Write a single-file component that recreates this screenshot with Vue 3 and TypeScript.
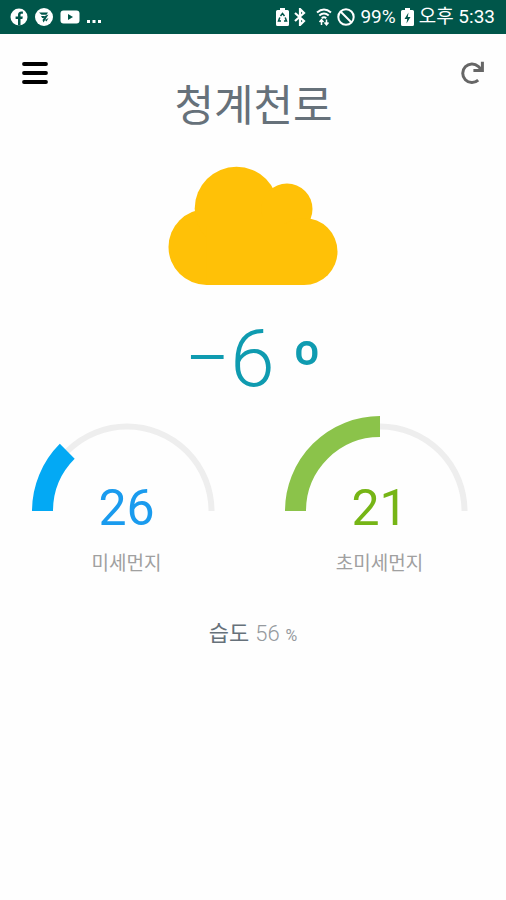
<script setup lang="ts">
interface Gauge {
  id: string
  label: string
  value: number
  ratio: number
  tone: string
}

const city = '청계천로'
const temperature = -6
const humidity = 56

const gauges: Gauge[] = [
  { id: 'pm10', label: '미세먼지', value: 26, ratio: 0.25, tone: 'blue' },
  { id: 'pm25', label: '초미세먼지', value: 21, ratio: 0.5, tone: 'green' },
]

const radius = 84.5
const center = 95

/** Arc path running clockwise from the left end of the half circle. */
function arc(ratio: number): string {
  const angle = Math.PI * (1 - ratio)
  const x = center + radius * Math.cos(angle)
  const y = center - radius * Math.sin(angle)
  return `M${center - radius} ${center}A${radius} ${radius} 0 0 1 ${x.toFixed(2)} ${y.toFixed(2)}`
}

function signed(value: number): string {
  return value < 0 ? `−${Math.abs(value)}` : `${value}`
}
</script>

<template>
  <div class="screen">
    <div class="status">
      <div class="group apps">
        <svg class="app" viewBox="0 0 18 18" aria-hidden="true">
          <circle cx="9" cy="9" r="8.5" fill="#fff" />
          <path d="M8 17.4V11H5.6V8.4H8V7c0-2.3 1.2-3.5 3.4-3.5h1.5v2.3h-1.2c-.9 0-1.2.5-1.2 1.2v1.4h2.3l-.4 2.6h-1.9v6.4z" fill="#00564a" />
        </svg>
        <svg class="app" viewBox="0 0 18 18" aria-hidden="true">
          <circle cx="9" cy="9" r="9" fill="#fff" />
          <path d="M4 4.5h9l-1.5 2.3H6.5zM6 8h4l-1.3 2H7.2zM13.5 6.5l-5 8-1-2.4 2.8-4.4zM10 12l3.5-2-2 3.5z" fill="#00564a" />
        </svg>
        <svg class="video" viewBox="0 0 20 14" aria-hidden="true">
          <rect x="0.5" y="0.5" width="19" height="13" rx="3" fill="#fff" />
          <path d="M8 4v6l5-3z" fill="#00564a" />
        </svg>
        <svg class="dots" viewBox="0 0 16 14" aria-hidden="true">
          <path d="M0 10h3v3H0zM5.5 10h3v3h-3zM11 10h3v3h-3z" fill="#fff" />
        </svg>
      </div>
      <div class="group system">
        <svg class="battery" viewBox="0 0 13 18" aria-hidden="true">
          <path d="M4 0h5v2h2.5q1.5 0 1.5 1.5v13q0 1.5-1.5 1.5h-10Q0 18 0 16.5v-13Q0 2 1.5 2H4z" fill="#fff" />
          <path d="M4.5 8l2-2.5 2 2.5M3.8 9.5L2.500 13H5M9.2 9.5l1.3 3.5H8" fill="none" stroke="#00564a" stroke-width="1.5" />
        </svg>
        <svg class="bluetooth" viewBox="0 0 12 18" aria-hidden="true">
          <path d="M1 5l9 8-4 4V1l4 4-9 8" fill="none" stroke="#fff" stroke-width="2.2" />
        </svg>
        <svg class="wifi" viewBox="0 0 16 18" aria-hidden="true">
          <path d="M1 4.5q7-6 14 0M3.3 7.5q4.7-4 9.4 0M5.8 10.2q2.2-1.8 4.4 0" fill="none" stroke="#fff" stroke-width="2" />
          <path d="M5.5 17v-5M3.5 14l2-2.3 2 2.3M10.5 11.5v5M8.5 14.5l2 2.3 2-2.3" fill="none" stroke="#fff" stroke-width="1.5" />
        </svg>
        <svg class="app" viewBox="0 0 18 18" aria-hidden="true">
          <circle cx="9" cy="9" r="7.7" fill="none" stroke="#fff" stroke-width="2" />
          <path d="M3.5 3.5l11 11" stroke="#fff" stroke-width="2" />
        </svg>
        <span>99%</span>
        <svg class="battery" viewBox="0 0 13 18" aria-hidden="true">
          <path d="M4 0h5v2h2.5q1.5 0 1.5 1.5v13q0 1.5-1.5 1.5h-10Q0 18 0 16.5v-13Q0 2 1.5 2H4z" fill="#fff" />
          <path d="M7.5 4.5L3.5 11h2.7l-.7 4.5 4-6.5H6.8z" fill="#00564a" />
        </svg>
        <span>오후 5:33</span>
      </div>
    </div>

    <header class="top">
      <button class="icon-button" type="button" aria-label="메뉴">
        <svg class="menu" viewBox="0 0 26 22" aria-hidden="true">
          <path d="M2 2h22M2 11h22M2 20h22" stroke="#000" stroke-width="3.8" stroke-linecap="round" />
        </svg>
      </button>
      <h1>{{ city }}</h1>
      <button class="icon-button" type="button" aria-label="새로고침">
        <svg class="refresh" viewBox="0 0 24 24" aria-hidden="true">
          <path d="M18.2 19.2A9.3 9.3 0 1 1 18.2 5.3L21.500 8.800" fill="none" stroke="#666" stroke-width="3" />
          <path d="M22.400 .8v8.700h-9" fill="none" stroke="#666" stroke-width="3" />
        </svg>
      </button>
    </header>

    <main>
      <svg class="cloud" viewBox="0 0 170 120" role="img" aria-label="흐림">
        <g fill="#ffc107">
          <circle cx="38.5" cy="81" r="38" />
          <circle cx="68.5" cy="42.5" r="41.8" />
          <circle cx="119" cy="43" r="25.5" />
          <circle cx="136" cy="85.5" r="33.5" />
          <path d="M38.5 60h97.5v59H38.5z" />
        </g>
      </svg>

      <p class="temperature">
        <span>{{ signed(temperature) }}</span>
        <span class="degree">º</span>
      </p>

      <section class="gauges">
        <figure v-for="gauge in gauges" :key="gauge.id" class="gauge" :class="gauge.tone">
          <div class="dial">
            <svg viewBox="0 0 190 95" aria-hidden="true">
              <path class="track" :d="arc(1)" />
              <path class="fill" :d="arc(gauge.ratio)" />
            </svg>
            <span class="value">{{ gauge.value }}</span>
          </div>
          <figcaption>{{ gauge.label }}</figcaption>
        </figure>
      </section>

      <p class="humidity">
        <span class="name">습도</span>
        <span>{{ humidity }}</span>
        <span class="unit">%</span>
      </p>
    </main>
  </div>
</template>

<style>
body {
  background: #fefefe;
}
</style>

<style scoped>
.screen {
  min-height: 100vh;
  font-family: Roboto, "Noto Sans CJK KR", sans-serif;
  background: #fefefe;
}

.status {
  display: flex;
  align-items: center;
  justify-content: space-between;
  box-sizing: border-box;
  height: 34px;
  padding: 0 11px 0 10px;
  background: #00564a;
  color: #fff;
  font-size: 19px;
  font-weight: 400;
  line-height: 36px;
  white-space: nowrap;
}

.group {
  display: flex;
  align-items: center;
}

.apps {
  gap: 7px;
}

.system {
  gap: 5px;
}

.app {
  width: 18px;
  height: 18px;
}

.video {
  width: 20px;
  height: 14px;
}

.dots {
  width: 16px;
  height: 14px;
}

.battery {
  width: 13px;
  height: 18px;
}

.bluetooth {
  width: 12px;
  height: 18px;
}

.wifi {
  width: 16px;
  height: 18px;
  margin-left: 5px;
}

.top {
  display: flex;
  align-items: flex-start;
  justify-content: space-between;
  padding: 16px 10px 0 11px;
}

.icon-button {
  display: flex;
  align-items: center;
  justify-content: center;
  width: 48px;
  height: 46px;
  padding: 0;
  border: 0;
  background: none;
}

.menu {
  width: 26px;
  height: 22px;
}

.refresh {
  width: 24px;
  height: 24px;
}

h1 {
  margin: 24px 0 0;
  color: #66717a;
  font-size: 43px;
  font-weight: 400;
  line-height: 64px;
}

main {
  display: flex;
  flex-direction: column;
  align-items: center;
}

.cloud {
  width: 170px;
  height: 120px;
  margin-top: 28px;
}

.temperature {
  display: flex;
  align-items: baseline;
  gap: 18px;
  margin: 28px 0 0;
  color: #0f9bb0;
  font-size: 80px;
  font-weight: 300;
  line-height: 90px;
}

.degree {
  font-size: 63px;
  font-weight: 700;
}

.gauges {
  display: grid;
  grid-template-columns: 1fr 1fr;
  width: 100%;
  margin-top: 6px;
}

.gauge {
  display: flex;
  flex-direction: column;
  align-items: center;
  margin: 0;
}

.dial {
  display: grid;
  justify-items: center;
  align-items: end;
  height: 122px;
}

.dial svg,
.value {
  grid-area: 1 / 1;
}

.dial svg {
  align-self: start;
  width: 190px;
  height: 95px;
}

.track,
.fill {
  fill: none;
}

.track {
  stroke: #eee;
  stroke-width: 6px;
}

.fill {
  stroke-width: 21px;
}

.blue .fill {
  stroke: #03a9f4;
}

.green .fill {
  stroke: #8bc34a;
}

.value {
  font-size: 50px;
  font-weight: 400;
  line-height: 60px;
}

.blue .value {
  color: #1a9bee;
}

.green .value {
  color: #76b516;
}

figcaption {
  margin-top: 12px;
  color: #a0a0a0;
  font-size: 19px;
  font-weight: 400;
  line-height: 28px;
}

.humidity {
  display: flex;
  align-items: baseline;
  gap: 6px;
  margin: 40px 0 0;
  color: #969a9e;
  font-size: 22px;
  font-weight: 300;
  line-height: 32px;
}

.name {
  color: #66717a;
  font-weight: 400;
}

.unit {
  font-size: 16px;
  font-weight: 400;
}
</style>
